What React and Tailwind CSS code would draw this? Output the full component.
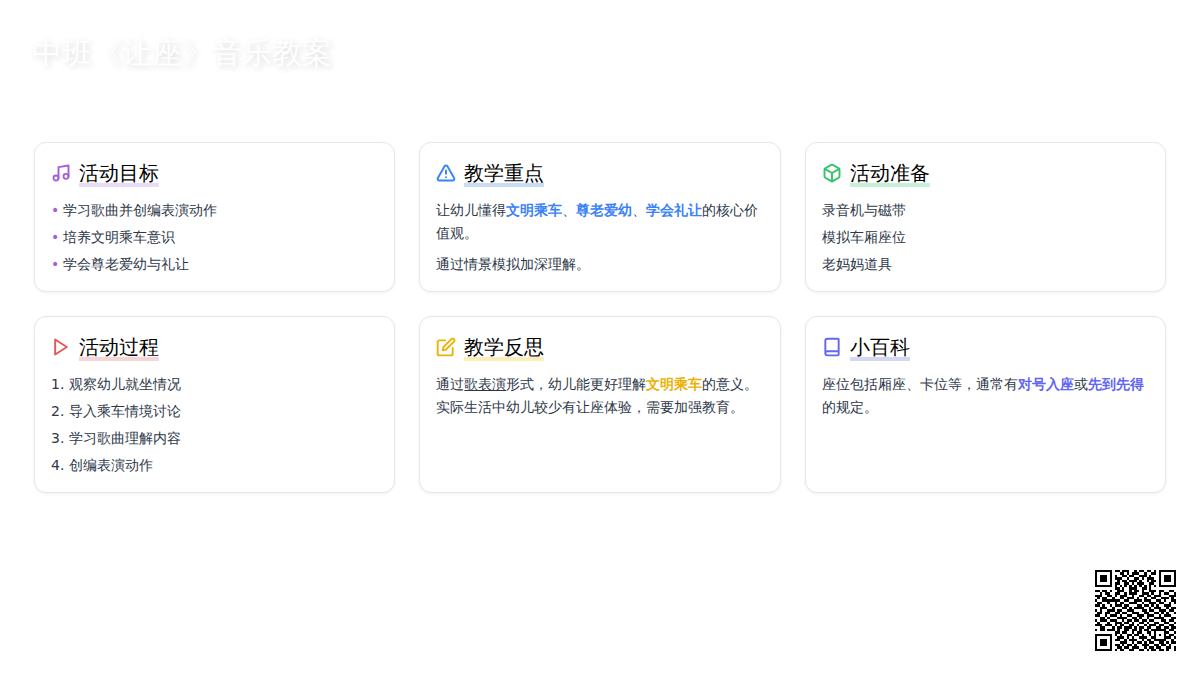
import { Music, TriangleAlert, Box, Book } from 'lucide-react'

// 33x33 modules; data area approximated from the reference
const QR = [
  '1111111' + '0' + '11011100101101101' + '0' + '1111111',
  '1000001' + '0' + '00110101110010011' + '0' + '1000001',
  '1011101' + '0' + '10011011001110100' + '0' + '1011101',
  '1011101' + '0' + '11100100110101110' + '0' + '1011101',
  '1011101' + '0' + '01011011101001011' + '0' + '1011101',
  '1000001' + '0' + '11001101011100110' + '0' + '1000001',
  '1111111' + '0' + '10101010101010101' + '0' + '1111111',
  '00000000' + '11010011100110100' + '00000000',
  '110110100111001011010011101100110',
  '001011001100101110011101001011001',
  '111001101011100100110110111000111',
  '010110010011011101001001100111010',
  '100111111100110011101110011010011',
  '011001001011001110010011101100101',
  '110100101110110001101101010011100',
  '001110010001101011110010111001011',
  '101001110110011100011011001110110',
  '011011001101100111001100110101001',
  '110010111010011001110111001011100',
  '001101000111100110100100111100011',
  '101110111001011011011011000110110',
  '010001001110110100110100110011001',
  '111011101011001101001011101100110',
  '001100010110111010110110011011011',
  '101101110100110110101101' + '11111' + '0110',
  '00000000' + '1101100101100110' + '10001' + '1001',
  '1111111' + '0' + '1010011011010010' + '10101' + '0110',
  '1000001' + '0' + '0111010100111001' + '10001' + '1101',
  '1011101' + '0' + '1100101110010110' + '11111' + '0010',
  '1011101' + '0' + '0011100101101011' + '00110' + '1011',
  '1011101' + '0' + '1101011010011100' + '11011' + '0100',
  '1000001' + '0' + '0110110111001011' + '01100' + '1101',
  '1111111' + '0' + '1011001100110101' + '10110' + '1001',
]

function QrCode() {
  return (
    <svg width="81" height="81" viewBox="0 0 33 33" shapeRendering="crispEdges">
      {QR.map((row, y) =>
        row.split('').map((c, x) => (c === '1' ? <rect key={x + '-' + y} x={x} y={y} width="1" height="1" fill="#000" /> : null))
      )}
    </svg>
  )
}

function PlayIcon({ size, strokeWidth, className }) {
  return (
    <svg width={size} height={size} viewBox="0 0 24 24" fill="none" stroke="currentColor" strokeWidth={strokeWidth} strokeLinecap="round" strokeLinejoin="round" className={className}>
      <polygon points="5 3 19 12 5 21 5 3" />
    </svg>
  )
}

function EditIcon({ size, strokeWidth, className }) {
  return (
    <svg width={size} height={size} viewBox="0 0 24 24" fill="none" stroke="currentColor" strokeWidth={strokeWidth} strokeLinecap="round" strokeLinejoin="round" className={className}>
      <path d="M11 4H4a2 2 0 0 0-2 2v14a2 2 0 0 0 2 2h14a2 2 0 0 0 2-2v-7" />
      <path d="M18.5 2.5a2.121 2.121 0 0 1 3 3L12 15l-4 1 1-4 9.5-9.5z" />
    </svg>
  )
}

function Card({ icon: Icon, iconClass, title, barClass, children }) {
  return (
    <div className="bg-white rounded-xl border border-gray-200 shadow-[0_1px_3px_rgba(0,0,0,0.06)] p-4">
      <div className="flex items-center gap-2 mb-3">
        <Icon size={20} strokeWidth={2.3} className={`shrink-0 ${iconClass}`} />
        <h2 className={`text-xl text-black leading-7 ${barClass}`}>{title}</h2>
      </div>
      {children}
    </div>
  )
}

export default function App() {
  return (
    <div className="w-[1200px] h-[675px] bg-white overflow-hidden flex flex-col font-['DejaVu_Sans',sans-serif] text-sm leading-relaxed text-[#2d3748]">
      <h1 className="pl-8 pt-[31px] h-[142px] shrink-0 text-3xl leading-[44px] text-white [text-shadow:2px_2px_6px_rgba(0,0,0,0.15)]">中班《让座》音乐教案</h1>

      <div className="grid grid-cols-3 gap-6 px-[34px]">
        <Card icon={Music} iconClass="text-[#a55fdc]" title="活动目标" barClass="bg-[linear-gradient(transparent_24px,#e9dcf7_24px)]">
          <ul className="space-y-1">
            {['学习歌曲并创编表演动作', '培养文明乘车意识', '学会尊老爱幼与礼让'].map((t) => (
              <li key={t} className="flex gap-1"><span className="text-[#a55fdc]">•</span>{t}</li>
            ))}
          </ul>
        </Card>

        <Card icon={TriangleAlert} iconClass="text-[#3b82f6]" title="教学重点" barClass="bg-[linear-gradient(transparent_24px,#c9dcf5_24px)]">
          <p className="mb-2">
            让幼儿懂得<b className="text-[#3b82f6]">文明乘车</b>、<b className="text-[#3b82f6]">尊老爱幼</b>、<b className="text-[#3b82f6]">学会礼让</b>的核心价值观。
          </p>
          <p>通过情景模拟加深理解。</p>
        </Card>

        <Card icon={Box} iconClass="text-[#34c26c]" title="活动准备" barClass="bg-[linear-gradient(transparent_24px,#c8f0d8_24px)]">
          <ul className="space-y-1">
            <li>录音机与磁带</li>
            <li>模拟车厢座位</li>
            <li>老妈妈道具</li>
          </ul>
        </Card>

        <Card icon={PlayIcon} iconClass="text-[#e05a5a]" title="活动过程" barClass="bg-[linear-gradient(transparent_24px,#f5d5d5_24px)]">
          <ol className="space-y-1">
            <li>1. 观察幼儿就坐情况</li>
            <li>2. 导入乘车情境讨论</li>
            <li>3. 学习歌曲理解内容</li>
            <li>4. 创编表演动作</li>
          </ol>
        </Card>

        <Card icon={EditIcon} iconClass="text-[#eab308]" title="教学反思" barClass="bg-[linear-gradient(transparent_24px,#fbeeb8_24px)]">
          <p>
            通过<span className="underline">歌表演</span>形式，幼儿能更好理解<b className="text-[#eab308]">文明乘车</b>的意义。实际生活中幼儿较少有让座体验，需要加强教育。
          </p>
        </Card>

        <Card icon={Book} iconClass="text-[#6366f1]" title="小百科" barClass="bg-[linear-gradient(transparent_24px,#d3d8f5_24px)]">
          <p>
            座位包括厢座、卡位等，通常有<b className="text-[#6366f1]">对号入座</b>或<b className="text-[#6366f1]">先到先得</b>的规定。
          </p>
        </Card>
      </div>

      <div className="mt-auto self-end mr-6 mb-6">
        <QrCode />
      </div>
    </div>
  )
}
